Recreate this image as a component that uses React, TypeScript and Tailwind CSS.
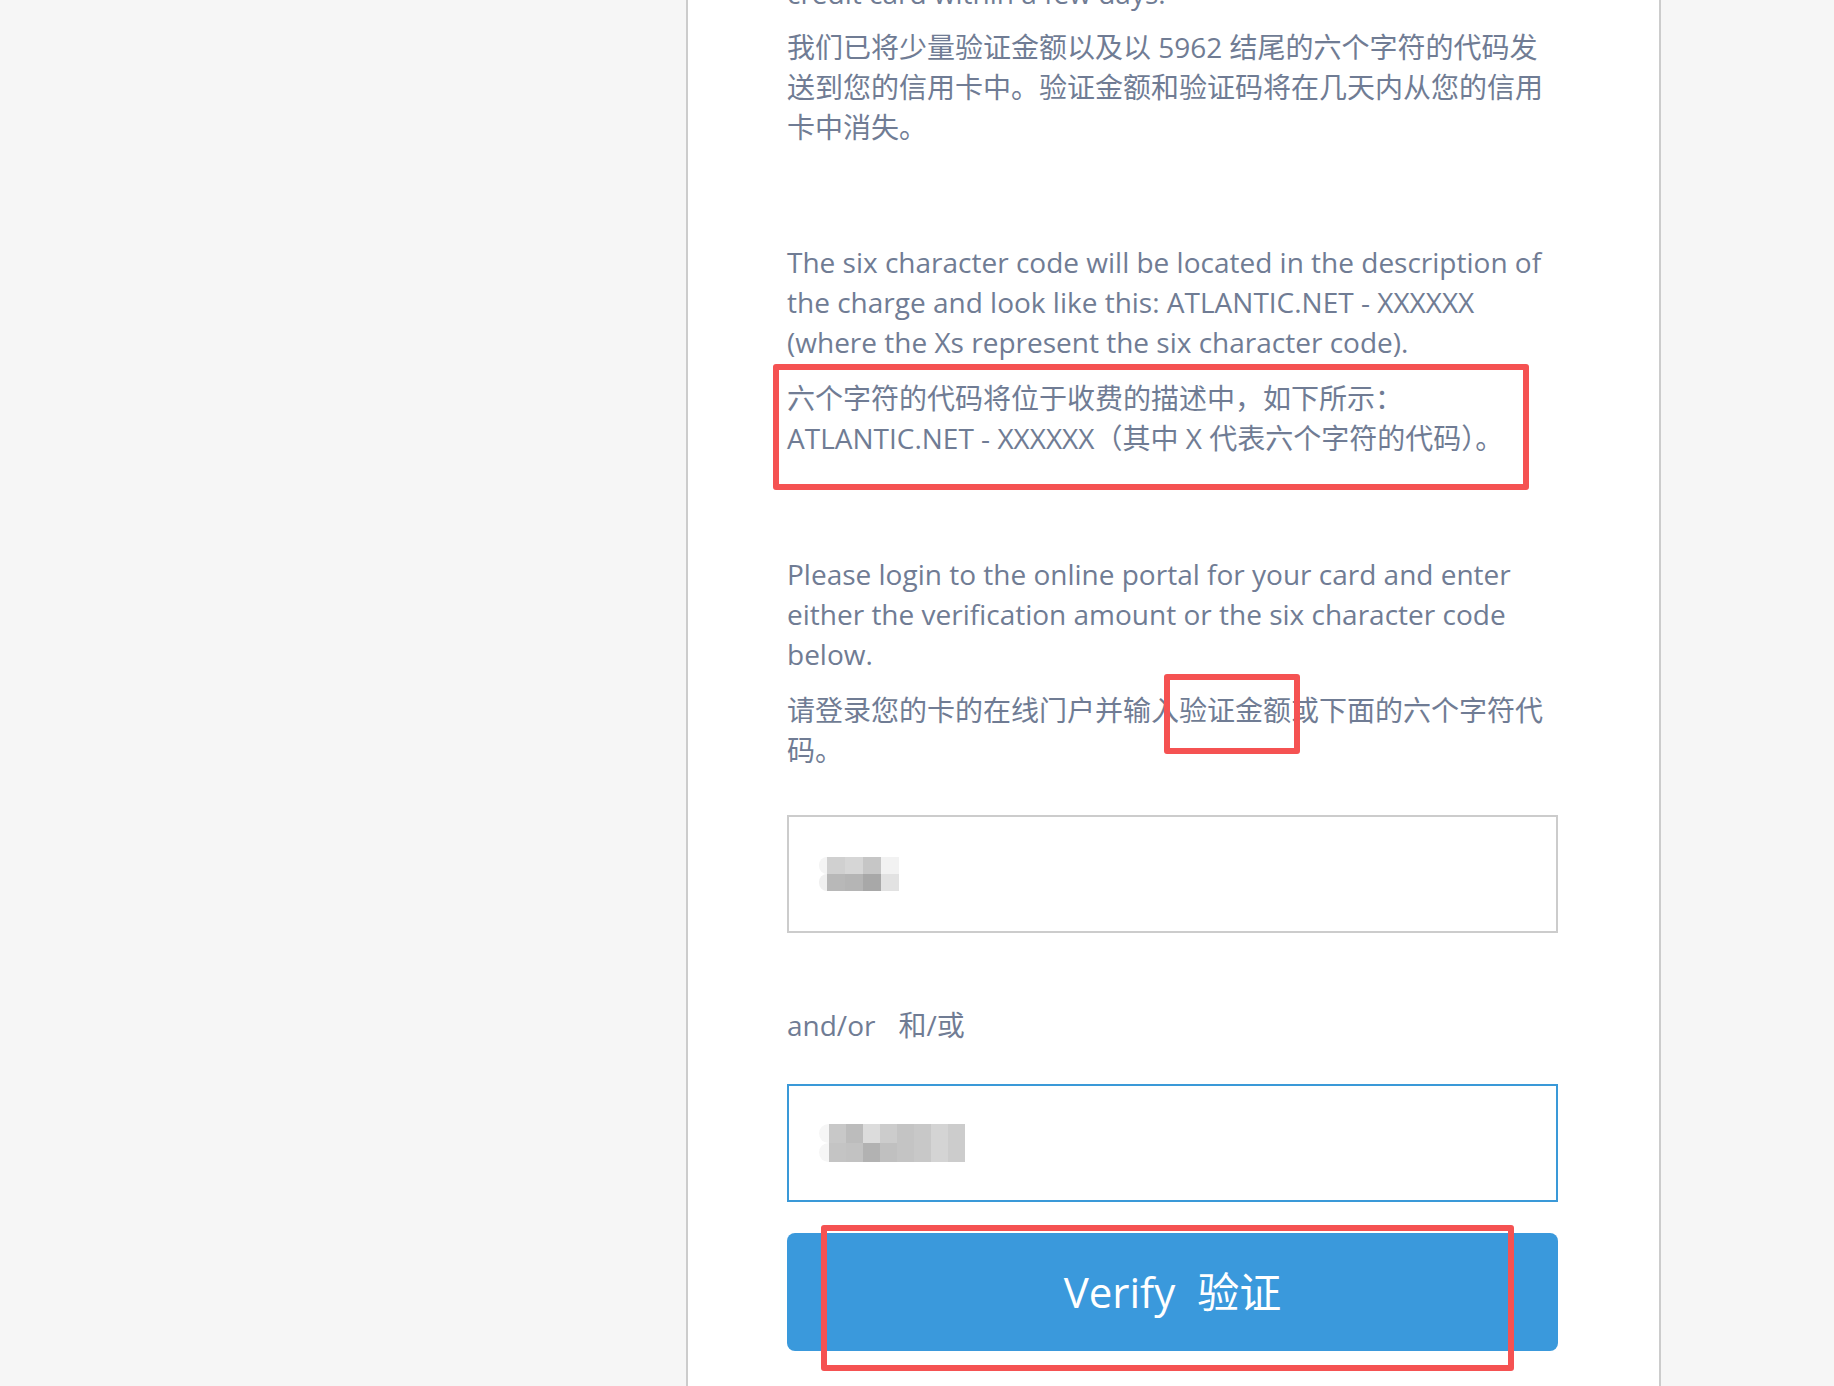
const blur1 = [
  ["#f4f4f4", "#d0d0d0", "#d6d6d6", "#c6c6c6", "#f2f2f2"],
  ["#f0f0f0", "#b8b8b8", "#b5b5b5", "#a8a8a8", "#e2e2e2"],
];

const blur2 = [
  ["#f6f6f6", "#c8c8c8", "#bcbcbc", "#dcdcdc", "#cccccc", "#c4c4c4", "#c8c8c8", "#d4d4d4", "#cccccc"],
  ["#f6f6f6", "#c4c4c4", "#c2c2c2", "#b2b2b2", "#c0c0c0", "#c4c4c4", "#c8c8c8", "#d4d4d4", "#cccccc"],
];

function Pixels({ rows, cell }: { rows: string[][]; cell: string }) {
  return (
    <div className="flex flex-col">
      {rows.map((row, i) => (
        <div key={i} className="flex">
          {row.map((c, j) => (
            <div key={j} className={cell} style={{ backgroundColor: c }} />
          ))}
        </div>
      ))}
    </div>
  );
}

function RedBox({ className }: { className: string }) {
  return <span className={`pointer-events-none absolute rounded-[3px] border-[6px] border-[#f55252] ${className}`} />;
}

export default function App() {
  return (
    <div className="h-[1386px] overflow-hidden bg-[#f6f6f6] font-['Open_Sans','Noto_Sans_CJK_SC',sans-serif] text-[28px] leading-[40px] text-[#707c94]">
      <div className="ml-[686px] flex h-[1386px] w-[975px] flex-col border-x-2 border-[#cccccc] bg-white pl-[99px] pr-[100px]">
        <div className="-mt-[27px] flex flex-col">
          <p className="whitespace-nowrap">credit card within a few days.</p>

          <p className="mt-[14px] whitespace-nowrap">
            我们已将少量验证金额以及以 5962 结尾的六个字符的代码发
            <br />
            送到您的信用卡中。验证金额和验证码将在几天内从您的信用
            <br />
            卡中消失。
          </p>

          <p className="mt-[95px] whitespace-nowrap">
            The six character code will be located in the description of
            <br />
            the charge and look like this: ATLANTIC.NET - XXXXXX
            <br />
            (where the Xs represent the six character code).
          </p>

          <p className="relative mt-[16px] whitespace-nowrap">
            六个字符的代码将位于收费的描述中，如下所示：
            <br />
            ATLANTIC.NET - XXXXXX（其中 X 代表六个字符的代码）。
            <RedBox className="-left-[14px] -top-[14px] h-[126px] w-[756px]" />
          </p>

          <p className="mt-[96px] whitespace-nowrap">
            Please login to the online portal for your card and enter
            <br />
            either the verification amount or the six character code
            <br />
            below.
          </p>

          <p className="relative mt-[16px] whitespace-nowrap">
            请登录您的卡的在线门户并输入验证金额或下面的六个字符代
            <br />
            码。
            <RedBox className="left-[377px] -top-[16px] h-[80px] w-[136px]" />
          </p>

          <div className="mt-[45px] flex h-[118px] w-[771px] items-center border-2 border-[#cccccc] bg-white pl-[30px]">
            <Pixels rows={blur1} cell="h-[17px] w-[18px] first:w-[8px] first:rounded-l-full" />
          </div>

          <p className="mt-[72px]">
            and/or<span className="ml-[23px]">和/或</span>
          </p>

          <div className="mt-[39px] flex h-[118px] w-[771px] items-center border-2 border-[#3a99d8] bg-white pl-[30px]">
            <Pixels rows={blur2} cell="h-[19px] w-[17px] first:w-[10px] first:rounded-l-full" />
          </div>

          <div className="relative mt-[31px]">
            <button className="flex h-[118px] w-[771px] items-center justify-center rounded-[8px] bg-[#3a99dc] text-[42px] text-white">
              Verify<span className="ml-[22px]">验证</span>
            </button>
            <RedBox className="left-[34px] -top-[8px] h-[146px] w-[693px]" />
          </div>
        </div>
      </div>
    </div>
  );
}
